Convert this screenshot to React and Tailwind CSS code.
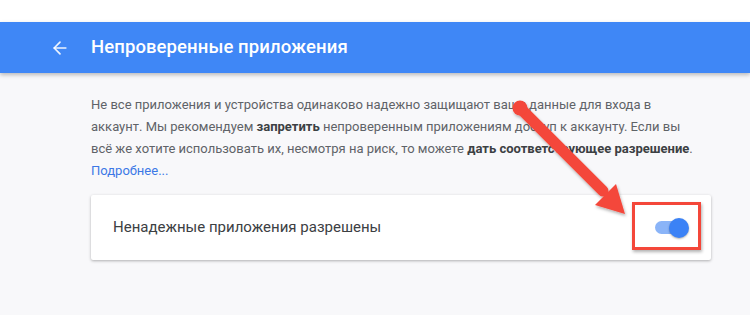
import React from 'react';
import { ArrowLeft } from 'lucide-react';

export default function App() {
  return (
    <div className="relative w-[750px] h-[315px] overflow-hidden bg-[#f8f8fa]" style={{ fontFamily: 'Roboto, "Noto Sans", sans-serif' }}>
      {/* top strip */}
      <div className="h-[22px] bg-white" />

      {/* Header */}
      <div className="h-[51px] bg-[#3f87f6] flex items-center shadow-[0_2px_4px_rgba(0,0,0,0.25)]">
        <ArrowLeft size={20} strokeWidth={2} className="ml-[50px] text-white/90" />
        <h1 className="ml-[21px] text-[18.5px] font-medium text-white tracking-[0.1px]">Непроверенные приложения</h1>
      </div>

      {/* Content */}
      <div className="pl-[91px] pt-[21px]">
        <p className="text-[13px] leading-[22px] text-[#5f6368] whitespace-nowrap">
          Не все приложения и устройства одинаково надежно защищают ваши данные для входа в<br />
          аккаунт. Мы рекомендуем <b className="font-bold text-[#3c4043]">запретить</b> непроверенным приложениям доступ к аккаунту. Если вы<br />
          всё же хотите использовать их, несмотря на риск, то можете <b className="font-bold text-[#3c4043]">дать соответствующее разрешение</b>.<br />
          <span className="text-[#3c78e6]">Подробнее...</span>
        </p>

        <div className="mt-[13px] w-[620px] h-[65px] bg-white rounded-[2px] shadow-[0_1px_3px_rgba(0,0,0,0.3)] flex items-center justify-between pl-[22px] pr-[22px]">
          <span className="text-[15px] text-[#3c4043]">Ненадежные приложения разрешены</span>
          <div className="relative w-[34px] h-[20px] flex items-center">
            <div className="w-[32px] h-[13px] rounded-full bg-[#8ab4f8]" />
            <div className="absolute right-0 w-[20px] h-[20px] rounded-full bg-[#3b82f6] shadow-[0_1px_2px_rgba(0,0,0,0.3)]" />
          </div>
        </div>
      </div>

      {/* Red highlight box */}
      <div className="absolute left-[632px] top-[202px] w-[69px] h-[48px] border-[3px] border-[#f4473a] shadow-[1px_2px_3px_rgba(0,0,0,0.3)]" />

      {/* Red arrow */}
      <svg className="absolute left-0 top-0" width="750" height="315" viewBox="0 0 750 315">
        <defs>
          <filter id="sh" x="-20%" y="-20%" width="140%" height="140%">
            <feDropShadow dx="1" dy="2" stdDeviation="1.5" floodColor="#000" floodOpacity="0.3" />
          </filter>
        </defs>
        <g filter="url(#sh)" fill="#f4473a">
          <line x1="520" y1="108" x2="603" y2="191" stroke="#f4473a" strokeWidth="11" strokeLinecap="round" />
          <circle cx="520" cy="108" r="7.5" />
          <polygon points="625,214 595,205 616,184" />
        </g>
      </svg>
    </div>
  );
}
